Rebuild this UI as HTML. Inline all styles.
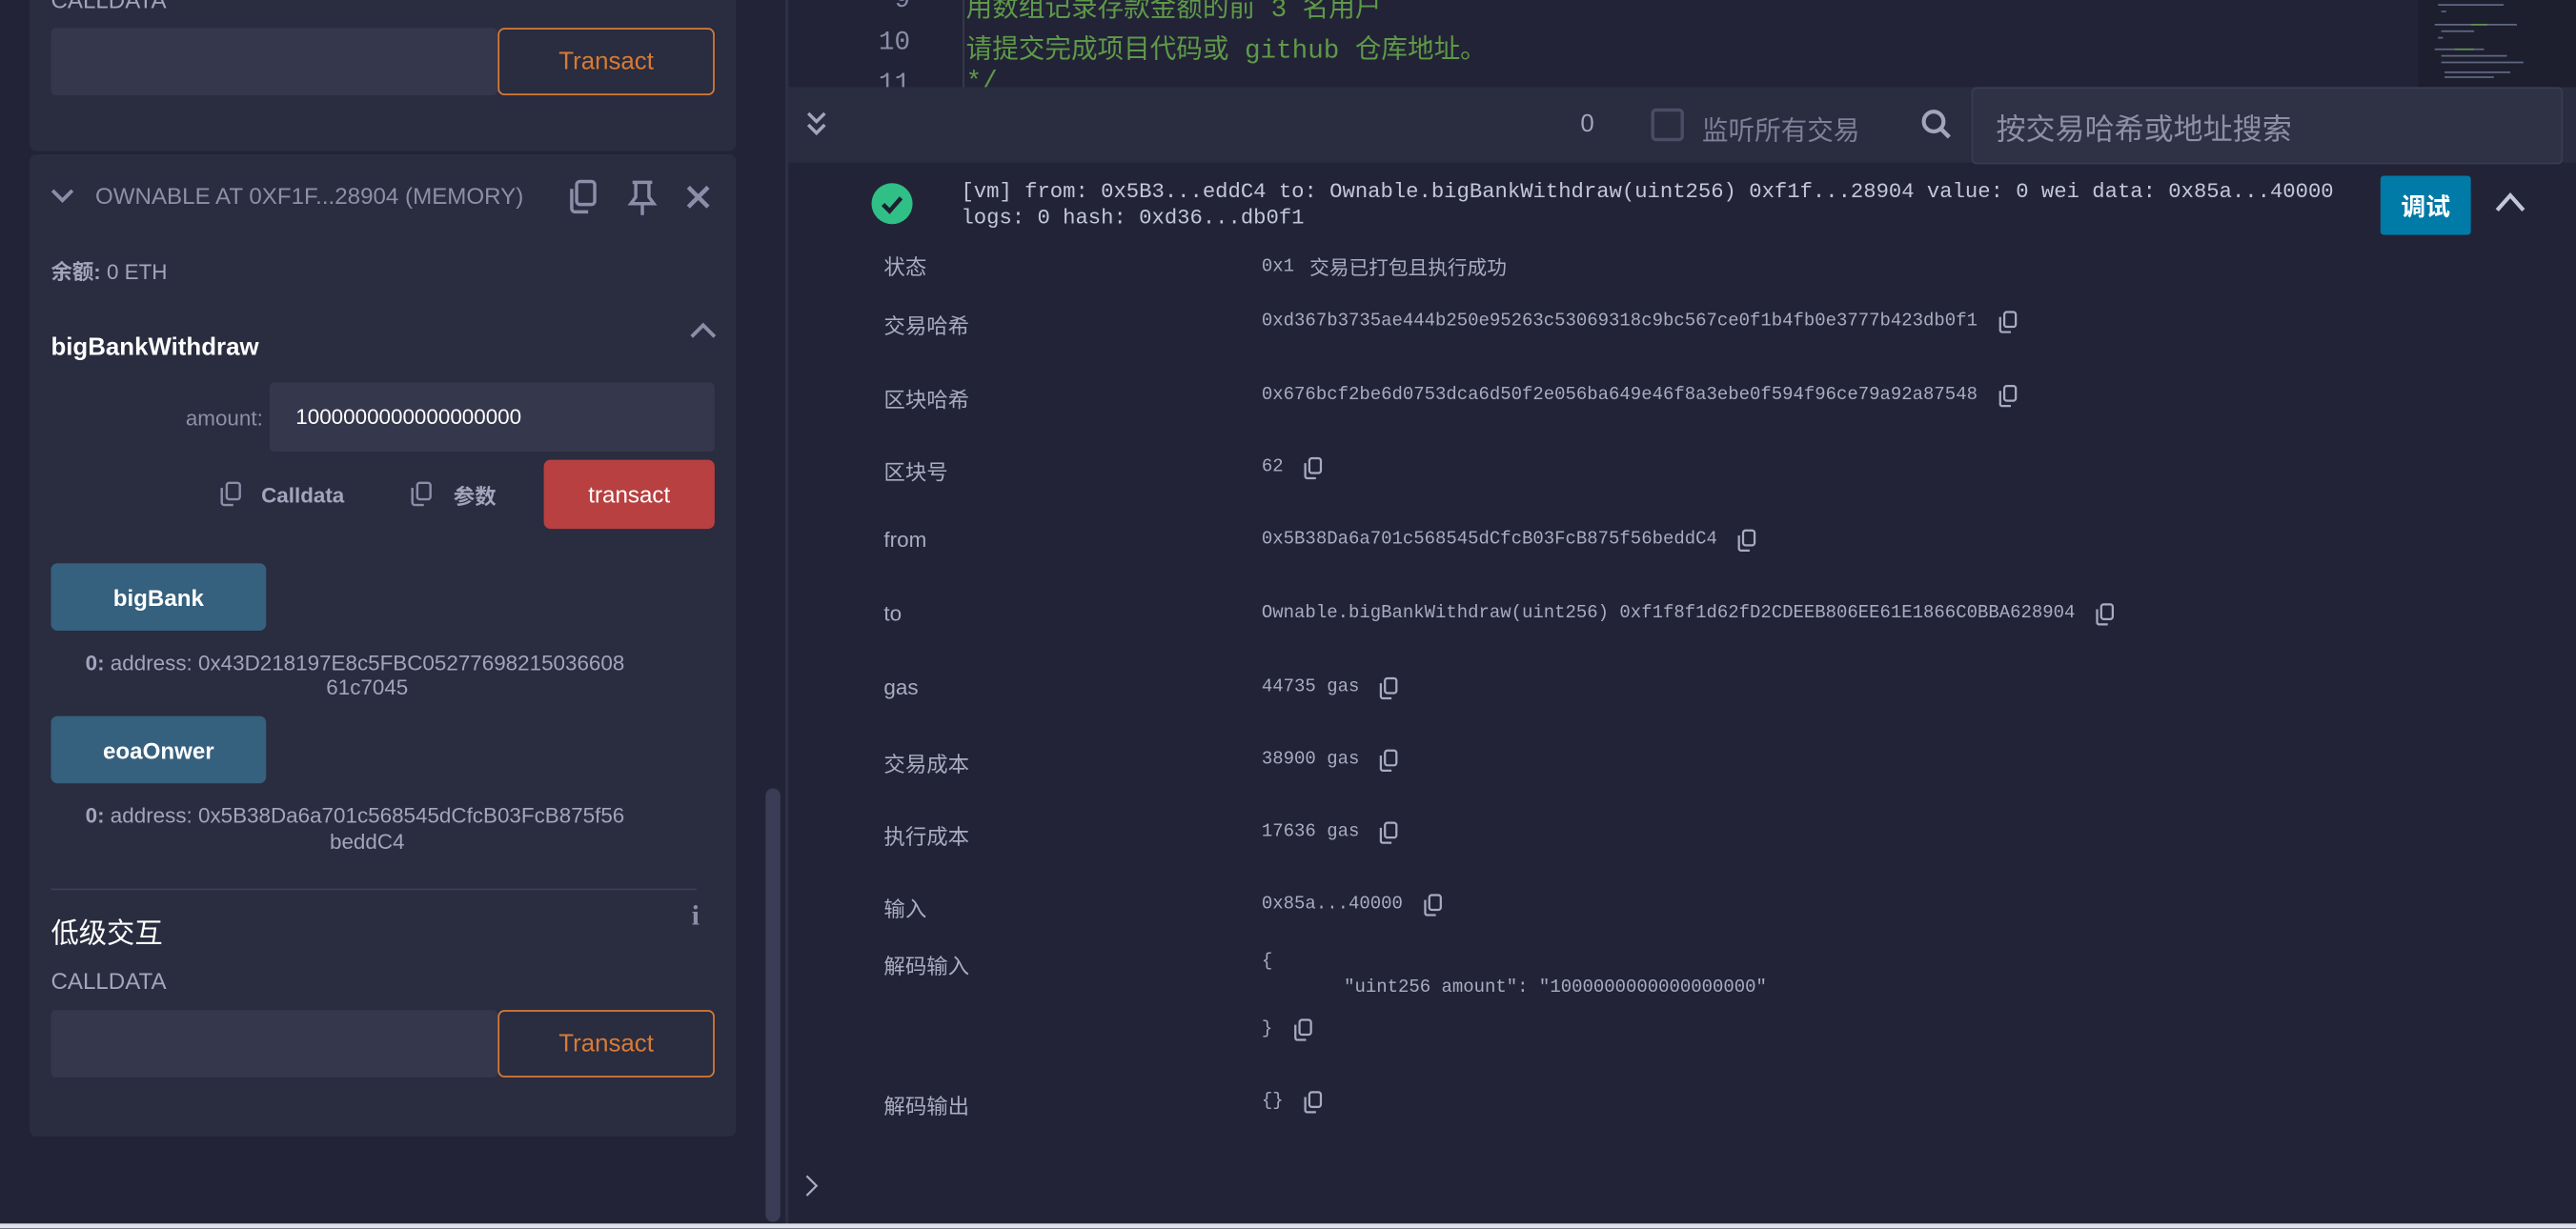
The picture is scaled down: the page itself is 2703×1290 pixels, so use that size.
<!DOCTYPE html>
<html><head><meta charset="utf-8">
<style>
*{margin:0;padding:0;box-sizing:border-box}
html,body{width:2703px;height:1290px;overflow:hidden;background:#222336}
#root{position:absolute;left:0;top:0;width:1568px;height:748px;transform:scale(1.72385);transform-origin:0 0;background:#222336;font-family:"Liberation Sans","Noto Sans CJK SC",sans-serif;color:#a2a5bb}
.a{position:absolute;white-space:nowrap}
.card{position:absolute;left:18px;width:430px;background:#2a2c3f;border-radius:4px}
.inp{position:absolute;background:#35374c;border-radius:3px}
.tbtn{position:absolute;border:1px solid #d77b35;border-radius:4px;color:#d77b35;font-size:15px;display:flex;align-items:center;justify-content:center}
.bbtn{position:absolute;background:#35607e;border-radius:4px;color:#fff;font-weight:bold;font-size:14px;display:flex;align-items:center;justify-content:center}
.mono{font-family:"Liberation Mono","Noto Sans CJK SC",monospace}
.lbl{position:absolute;left:538px;font-size:13px;color:#a9acc0}
.val{position:absolute;left:768px;font-size:11px;color:#a9acc0;font-family:"Liberation Mono","Noto Sans CJK SC",monospace;white-space:pre;display:flex;align-items:center}
.val svg{margin-left:12px}
</style></head><body>
<div id="root">
<!-- left -->
<div class="card" style="top:-10px;height:102px"></div>
<div class="a" style="left:31px;top:-8px;font-size:14px;color:#a2a5bb">CALLDATA</div>
<div class="inp" style="left:31px;top:17px;width:272px;height:41px"></div>
<div class="tbtn" style="left:303px;top:17px;width:132px;height:41px">Transact</div>

<div class="card" style="top:94px;height:598px"></div>
<svg class="a" style="left:30px;top:113px" width="16" height="12" viewBox="0 0 16 12"><path d="M2 3l6 6 6-6" stroke="#8a8ea8" stroke-width="2.2" fill="none"/></svg>
<div class="a" style="left:58px;top:111px;font-size:14px;color:#8d90a6">OWNABLE AT 0XF1F...28904 (MEMORY)</div>
<svg class="a" style="left:345px;top:109px" width="20" height="22" viewBox="0 0 20 22"><rect x="6" y="1.5" width="11" height="14" rx="2" stroke="#8a8ea8" stroke-width="2" fill="none"/><path d="M3 6v12a2 2 0 0 0 2 2h8" stroke="#8a8ea8" stroke-width="2" fill="none"/></svg>
<svg class="a" style="left:381px;top:109px" width="20" height="22" viewBox="0 0 20 22"><path d="M4 2h12M6 2v9l-3 4h14l-3-4V2M10 15v7" stroke="#8a8ea8" stroke-width="2" fill="none"/></svg>
<svg class="a" style="left:417px;top:112px" width="16" height="16" viewBox="0 0 16 16"><path d="M2 2l12 12M14 2L2 14" stroke="#8a8ea8" stroke-width="2.6"/></svg>
<div class="a" style="left:31px;top:155px;font-size:13px;color:#a2a5bb"><b>余额:</b> 0 ETH</div>
<div class="a" style="left:31px;top:203px;font-size:15px;color:#fff;font-weight:bold">bigBankWithdraw</div>
<svg class="a" style="left:419px;top:195px" width="18" height="12" viewBox="0 0 18 12"><path d="M2 10l7-7 7 7" stroke="#8a8ea8" stroke-width="2.2" fill="none"/></svg>
<div class="a" style="left:100px;top:247px;width:60px;text-align:right;font-size:13px;color:#8d90a6">amount:</div>
<div class="inp" style="left:164px;top:233px;width:271px;height:42px"></div>
<div class="a" style="left:180px;top:246px;font-size:13px;color:#fff">1000000000000000000</div>
<svg class="a" style="left:133px;top:293px" width="14" height="16" viewBox="0 0 14 16"><rect x="5" y="1" width="8" height="10" rx="1.5" stroke="#8a8ea8" stroke-width="1.4" fill="none"/><path d="M2 4v9a1.5 1.5 0 0 0 1.5 1.5H9" stroke="#8a8ea8" stroke-width="1.4" fill="none"/></svg>
<div class="a" style="left:159px;top:294px;font-size:13px;color:#a2a5bb;font-weight:bold">Calldata</div>
<svg class="a" style="left:249px;top:293px" width="14" height="16" viewBox="0 0 14 16"><rect x="5" y="1" width="8" height="10" rx="1.5" stroke="#8a8ea8" stroke-width="1.4" fill="none"/><path d="M2 4v9a1.5 1.5 0 0 0 1.5 1.5H9" stroke="#8a8ea8" stroke-width="1.4" fill="none"/></svg>
<div class="a" style="left:276px;top:292px;font-size:13px;color:#a2a5bb;font-weight:bold">参数</div>
<div class="a" style="left:331px;top:280px;width:104px;height:42px;background:#b84040;border-radius:4px;color:#fff;font-size:14px;display:flex;align-items:center;justify-content:center">transact</div>
<div class="bbtn" style="left:31px;top:343px;width:131px;height:41px">bigBank</div>
<div class="a" style="left:52px;top:396px;font-size:13px;color:#a2a5bb"><b>0:</b> address: 0x43D218197E8c5FBC05277698215036608</div>
<div class="a" style="left:52px;top:411px;width:343px;text-align:center;font-size:13px;color:#a2a5bb">61c7045</div>
<div class="bbtn" style="left:31px;top:436px;width:131px;height:41px">eoaOnwer</div>
<div class="a" style="left:52px;top:489px;font-size:13px;color:#a2a5bb"><b>0:</b> address: 0x5B38Da6a701c568545dCfcB03FcB875f56</div>
<div class="a" style="left:52px;top:505px;width:343px;text-align:center;font-size:13px;color:#a2a5bb">beddC4</div>
<div class="a" style="left:31px;top:541px;width:393px;height:1px;background:#3d4058"></div>
<div class="a" style="left:31px;top:554px;font-size:17px;color:#fff">低级交互</div>
<div class="a" style="left:421px;top:548px;font-size:17px;color:#8a8ea8;font-weight:bold;font-family:'Liberation Serif',serif">i</div>
<div class="a" style="left:31px;top:589px;font-size:14px;color:#a2a5bb">CALLDATA</div>
<div class="inp" style="left:31px;top:615px;width:272px;height:41px"></div>
<div class="tbtn" style="left:303px;top:615px;width:132px;height:41px">Transact</div>
<div class="a" style="left:466px;top:480px;width:9px;height:264px;background:#3a3d55;border-radius:5px"></div>

<!-- right -->
<div class="a" style="left:478px;top:0;width:2px;height:748px;background:#2e3046"></div>
<div class="a" style="left:480px;top:0;width:1088px;height:53px;background:#222336"></div>
<div class="a mono" style="left:520px;top:-9px;width:34px;text-align:right;font-size:16px;color:#8a8ea8">9</div>
<div class="a mono" style="left:520px;top:17px;width:34px;text-align:right;font-size:16px;color:#8a8ea8">10</div>
<div class="a mono" style="left:520px;top:42px;width:34px;text-align:right;font-size:16px;color:#8a8ea8">11</div>
<div class="a" style="left:586px;top:0;width:1px;height:53px;background:#3a3d52"></div>
<div class="a mono" style="left:588px;top:-9px;font-size:16px;color:#5e9a48">用数组记录存款金额的前 3 名用户</div>
<div class="a mono" style="left:588px;top:16px;font-size:16px;color:#5e9a48">请提交完成项目代码或 github 仓库地址。</div>
<div class="a mono" style="left:588px;top:41px;font-size:16px;color:#5e9a48"> */</div>
<div class="a" style="left:1472px;top:0;width:96px;height:53px;background:#1d1e2e"></div>
<svg class="a" style="left:1474px;top:0" width="92" height="50"><g stroke="#7d86a8" stroke-width="1" opacity=".7"><path d="M10 3h40M12 7h3M8 15h50M12 19h20M10 23h3M8 30h30M12 34h40M12 38h50M14 44h40M14 47h30"/></g><g stroke="#5e9a48" opacity=".8"><path d="M30 15h10M20 30h12"/></g></svg>
<div class="a" style="left:480px;top:53px;width:1088px;height:46px;background:#2a2c3f"></div>
<svg class="a" style="left:489px;top:67px" width="16" height="18" viewBox="0 0 16 18"><path d="M3 2l5 5 5-5M3 9l5 5 5-5" stroke="#a2a5bb" stroke-width="2" fill="none"/></svg>
<div class="a" style="left:962px;top:67px;font-size:15px;color:#a2a5bb">0</div>
<div class="a" style="left:1005px;top:66px;width:20px;height:20px;border:2px solid #4a4d64;border-radius:3px"></div>
<div class="a" style="left:1036px;top:66px;font-size:16px;color:#7d8098">监听所有交易</div>
<svg class="a" style="left:1169px;top:66px" width="20" height="20" viewBox="0 0 20 20"><circle cx="8" cy="8" r="6" stroke="#a2a5bb" stroke-width="2.4" fill="none"/><path d="M12.5 12.5l5 5" stroke="#a2a5bb" stroke-width="2.6"/></svg>
<div class="a" style="left:1200px;top:53px;width:360px;height:47px;background:#2f3145;border:1px solid #3a3d52;border-radius:3px"></div>
<div class="a" style="left:1215px;top:65px;font-size:18px;color:#8d90a6">按交易哈希或地址搜索</div>

<svg class="a" style="left:530px;top:111px" width="26" height="26" viewBox="0 0 26 26"><circle cx="13" cy="13" r="12.5" fill="#2fbf87"/><path d="M7.5 13.5l4 4 7-8" stroke="#1d1e2e" stroke-width="2.6" fill="none"/></svg>
<div class="a mono" style="left:585px;top:109px;font-size:12.9px;color:#c3c6d8">[vm]  from: 0x5B3...eddC4 to: Ownable.bigBankWithdraw(uint256) 0xf1f...28904 value: 0 wei data: 0x85a...40000</div>
<div class="a mono" style="left:585px;top:125px;font-size:12.9px;color:#c3c6d8">logs: 0 hash: 0xd36...db0f1</div>
<div class="a" style="left:1449px;top:107px;width:55px;height:36px;background:#007aa6;border-radius:2px;color:#fff;font-weight:bold;font-size:15px;display:flex;align-items:center;justify-content:center">调试</div>
<svg class="a" style="left:1518px;top:116px" width="20" height="14" viewBox="0 0 20 14"><path d="M2 12l8-9 8 9" stroke="#c3c6d8" stroke-width="2.4" fill="none"/></svg>

<svg width="0" height="0" style="position:absolute"><defs><symbol id="cp" viewBox="0 0 12 14"><rect x="4" y="1" width="7" height="9" rx="1.5" stroke="#a9acc0" stroke-width="1.3" fill="none"/><path d="M1.5 4v8a1.2 1.2 0 0 0 1.2 1.2H8" stroke="#a9acc0" stroke-width="1.3" fill="none"/></symbol></defs></svg>

<div class="lbl" style="top:152px">状态</div><div class="val" style="top:154px"><span>0x1 </span><span style="font-family:'Noto Sans CJK SC',sans-serif;font-size:12px"> 交易已打包且执行成功</span></div>
<div class="lbl" style="top:188px">交易哈希</div><div class="val" style="top:189px">0xd367b3735ae444b250e95263c53069318c9bc567ce0f1b4fb0e3777b423db0f1<svg width="12" height="14"><use href="#cp"/></svg></div>
<div class="lbl" style="top:233px">区块哈希</div><div class="val" style="top:234px">0x676bcf2be6d0753dca6d50f2e056ba649e46f8a3ebe0f594f96ce79a92a87548<svg width="12" height="14"><use href="#cp"/></svg></div>
<div class="lbl" style="top:277px">区块号</div><div class="val" style="top:278px">62<svg width="12" height="14"><use href="#cp"/></svg></div>
<div class="lbl" style="top:321px">from</div><div class="val" style="top:322px">0x5B38Da6a701c568545dCfcB03FcB875f56beddC4<svg width="12" height="14"><use href="#cp"/></svg></div>
<div class="lbl" style="top:366px">to</div><div class="val" style="top:367px">Ownable.bigBankWithdraw(uint256) 0xf1f8f1d62fD2CDEEB806EE61E1866C0BBA628904<svg width="12" height="14"><use href="#cp"/></svg></div>
<div class="lbl" style="top:411px">gas</div><div class="val" style="top:412px">44735 gas<svg width="12" height="14"><use href="#cp"/></svg></div>
<div class="lbl" style="top:455px">交易成本</div><div class="val" style="top:456px">38900 gas<svg width="12" height="14"><use href="#cp"/></svg></div>
<div class="lbl" style="top:499px">执行成本</div><div class="val" style="top:500px">17636 gas<svg width="12" height="14"><use href="#cp"/></svg></div>
<div class="lbl" style="top:543px">输入</div><div class="val" style="top:544px">0x85a...40000<svg width="12" height="14"><use href="#cp"/></svg></div>
<div class="lbl" style="top:578px">解码输入</div>
<div class="val" style="top:580px">{</div>
<div class="val" style="top:596px;left:818px">"uint256 amount": "1000000000000000000"</div>
<div class="val" style="top:620px">}<svg width="12" height="14"><use href="#cp"/></svg></div>
<div class="lbl" style="top:663px">解码输出</div><div class="val" style="top:664px">{}<svg width="12" height="14"><use href="#cp"/></svg></div>
<svg class="a" style="left:489px;top:715px" width="10" height="14" viewBox="0 0 10 14"><path d="M2 1l6 6-6 6" stroke="#a9acc0" stroke-width="1.3" fill="none"/></svg>

<div class="a" style="left:0;top:745px;width:1568px;height:3px;background:#dfe1ea"></div>
</div>
</body></html>
